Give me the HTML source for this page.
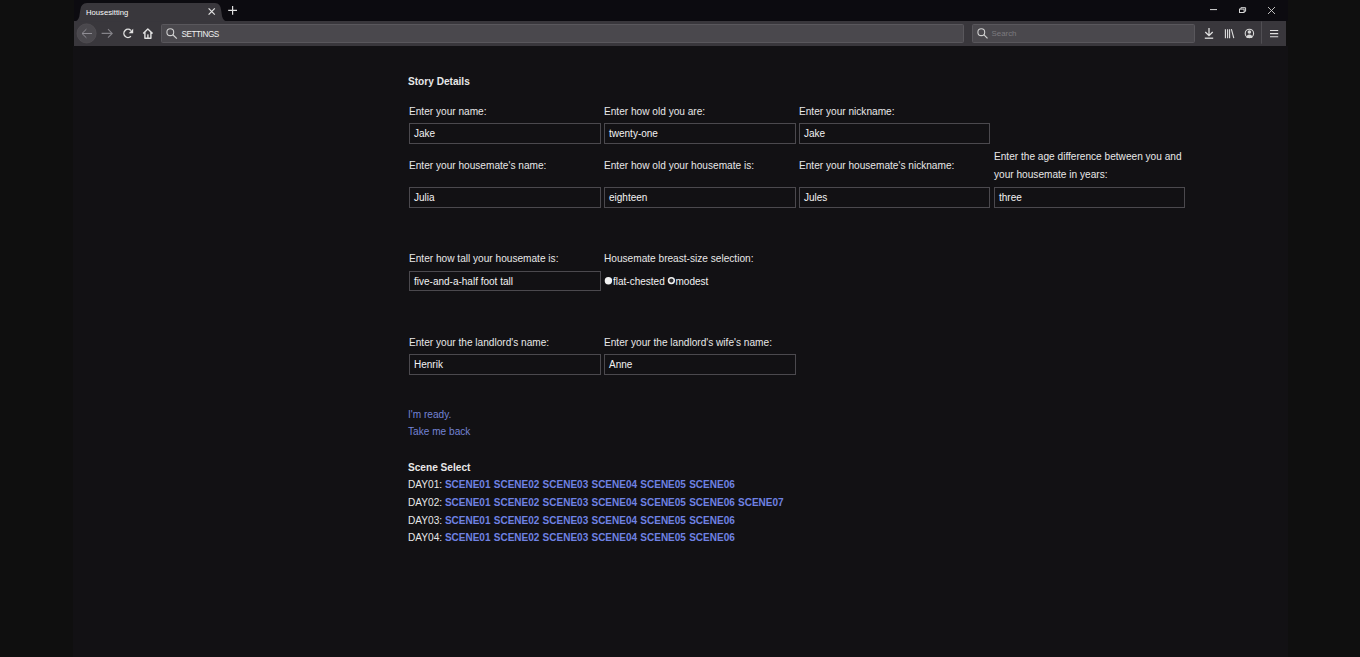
<!DOCTYPE html>
<html><head><meta charset="utf-8">
<style>
*{margin:0;padding:0;box-sizing:border-box}
html,body{width:1360px;height:657px;overflow:hidden;background:#0f0f0f;font-family:"Liberation Sans",sans-serif}
.a{position:absolute}
#titlebar{left:74px;top:0;width:1214px;height:21px;background:#0c0b10}
#toolbar{left:74px;top:21px;width:1212px;height:25px;background:#39373c}
#content{left:73px;top:46px;width:1215px;height:611px;background:#121114}
#tab{left:74px;top:3px;width:154px;height:19px;background:#39373c;border-radius:7px 7px 0 0}
.t{position:absolute;white-space:nowrap;line-height:14px;font-size:10.12px;color:#e8e8e8}
.b{font-weight:bold}
.inp{position:absolute;border:1px solid #4b494e;background:#121114;height:21px;width:192px}
.v{position:absolute;white-space:nowrap;line-height:14px;font-size:10px;color:#f3f3f3}
.lk{color:#7383d4}
.sc{color:#6f82e3;font-weight:bold;word-spacing:0.5px;font-size:10px}
</style></head><body>
<div class="a" id="titlebar"></div>
<div class="a" id="content"></div>
<div class="a" id="toolbar"></div>
<svg class="a" style="left:0;top:0" width="1360" height="50" viewBox="0 0 1360 50">
<path d="M74,21.5 C76.5,21.5 78.6,19.5 79.3,16.5 L80.2,10.5 Q80.8,3 87,3 L215,3 Q220.6,3 221.2,10.5 L222.1,16.5 C222.8,19.5 225,21.5 228,21.5 Z" fill="#39373c"/>
<!-- tab close -->
<path d="M208.6,8.4 L214.8,14.6 M214.8,8.4 L208.6,14.6" stroke="#e6e6e6" stroke-width="1.2" fill="none"/>
<!-- new tab + -->
<path d="M232.6,6 V14.8 M228.2,10.4 H237" stroke="#e0e0e0" stroke-width="1.2" fill="none"/>
<!-- window controls -->
<path d="M1210,9.6 H1217" stroke="#d8d8d8" stroke-width="1" fill="none"/>
<rect x="1239.5" y="9.1" width="4.6" height="3.4" stroke="#d8d8d8" stroke-width="1" fill="none"/>
<path d="M1240.9,9.1 V7.7 H1245.6 V11.3 H1244.1" stroke="#d8d8d8" stroke-width="1" fill="none"/>
<path d="M1268,7 L1275,14 M1275,7 L1268,14" stroke="#d0d0d0" stroke-width="0.9" fill="none"/>
<!-- back button -->
<circle cx="86.6" cy="33.4" r="9.6" fill="#4a484d" stroke="#555358" stroke-width="0.6"/>
<path d="M92,33.5 H82.2 M86.4,29.2 L82,33.5 L86.4,37.8" stroke="#8f8d94" stroke-width="1" fill="none"/>
<!-- forward -->
<path d="M101.6,33.4 H112 M108,29.2 L112.2,33.4 L108,37.6" stroke="#858389" stroke-width="1.1" fill="none"/>
<!-- reload -->
<path d="M130.9,30.5 A4.1,4.1 0 1 0 130.9,36.3" stroke="#e2e2e2" stroke-width="1.4" fill="none"/>
<path d="M133.2,28.8 L133.2,33.3 L128.7,33.3 Z" fill="#e2e2e2"/>
<!-- home -->
<path d="M143.2,33.6 L147.8,29 L152.6,33.6 M144.9,32.2 V38.2 H150.9 V32.2" stroke="#e2e2e2" stroke-width="1.4" fill="none" stroke-linejoin="round"/><rect x="147.2" y="34.4" width="1.4" height="3.8" fill="#e2e2e2"/>
<!-- url field -->
<rect x="161.5" y="24.5" width="802" height="18" rx="1" fill="#4a484d" stroke="#59575c" stroke-width="1"/>
<circle cx="170.3" cy="32.2" r="3.4" stroke="#d0d0d0" stroke-width="1.1" fill="none"/>
<path d="M172.8,34.7 L176.8,38.6" stroke="#d0d0d0" stroke-width="1.2"/>
<!-- search field -->
<rect x="972.5" y="24.5" width="222" height="18" rx="1" fill="#4a484d" stroke="#59575c" stroke-width="1"/>
<circle cx="981.3" cy="32.2" r="3.4" stroke="#d0d0d0" stroke-width="1.1" fill="none"/>
<path d="M983.8,34.7 L987.5,38.4" stroke="#d0d0d0" stroke-width="1.2"/>
<!-- download -->
<path d="M1209,28 V35.5 M1205.3,32 L1209,35.7 L1212.7,32" stroke="#e0e0e0" stroke-width="1.3" fill="none"/>
<path d="M1204.8,38.2 H1213.2" stroke="#e0e0e0" stroke-width="1.3"/>
<!-- library -->
<path d="M1225.4,29.2 V38.2 M1227.6,29.2 V38.2 M1229.6,29.2 V38.2 M1231.4,29.2 L1233.8,38.2" stroke="#e0e0e0" stroke-width="1.1" fill="none"/>
<!-- account -->
<circle cx="1249.4" cy="33.4" r="4.2" stroke="#d8d8d8" stroke-width="1.1" fill="none"/>
<circle cx="1249.4" cy="32" r="1.8" fill="#d8d8d8"/>
<path d="M1246.4,37.9 Q1246.7,34.5 1249.4,34.5 Q1252.1,34.5 1252.4,37.9 Z" fill="#d8d8d8"/>
<!-- separator -->
<path d="M1261.5,21.5 V43.7" stroke="#514f54" stroke-width="1"/>
<!-- menu -->
<path d="M1270,30.5 H1278.2 M1270,33.6 H1278.2 M1270,36.7 H1278.2" stroke="#e0e0e0" stroke-width="1.1"/>
</svg>
<div class="a" style="left:86px;top:6.5px;font-size:7.7px;line-height:12px;color:#fafafa;white-space:nowrap">Housesitting</div>
<div class="a" style="left:181.5px;top:29px;font-size:8.2px;letter-spacing:-0.45px;line-height:12px;color:#f0f0f0;white-space:nowrap">SETTINGS</div>
<div class="a" style="left:991.5px;top:28px;font-size:7.9px;line-height:12px;color:#7c7a7f;white-space:nowrap">Search</div>

<!-- page content -->
<div class="t b" style="left:408px;top:75px">Story Details</div>

<div class="t" style="left:409px;top:105px">Enter your name:</div>
<div class="t" style="left:604px;top:105px">Enter how old you are:</div>
<div class="t" style="left:799px;top:105px">Enter your nickname:</div>
<div class="inp" style="left:409px;top:123px;width:192px"></div>
<div class="inp" style="left:604px;top:123px;width:192px"></div>
<div class="inp" style="left:799px;top:123px;width:191px"></div>
<div class="v" style="left:414px;top:127px">Jake</div>
<div class="v" style="left:609px;top:127px">twenty-one</div>
<div class="v" style="left:804px;top:127px">Jake</div>

<div class="t" style="left:409px;top:159px">Enter your housemate's name:</div>
<div class="t" style="left:604px;top:159px">Enter how old your housemate is:</div>
<div class="t" style="left:799px;top:159px">Enter your housemate's nickname:</div>
<div class="t" style="left:994px;top:148px;line-height:18px">Enter the age difference between you and<br>your housemate in years:</div>
<div class="inp" style="left:409px;top:187px;width:192px"></div>
<div class="inp" style="left:604px;top:187px;width:192px"></div>
<div class="inp" style="left:799px;top:187px;width:191px"></div>
<div class="inp" style="left:994px;top:187px;width:191px"></div>
<div class="v" style="left:414px;top:191px">Julia</div>
<div class="v" style="left:609px;top:191px">eighteen</div>
<div class="v" style="left:804px;top:191px">Jules</div>
<div class="v" style="left:999px;top:191px">three</div>

<div class="t" style="left:409px;top:252px">Enter how tall your housemate is:</div>
<div class="t" style="left:604px;top:252px">Housemate breast-size selection:</div>
<div class="inp" style="left:409px;top:271px;width:192px;height:20px"></div>
<div class="v" style="left:414px;top:275px">five-and-a-half foot tall</div>
<svg class="a" style="left:600px;top:272px" width="80" height="18" viewBox="600 272 80 18">
<circle cx="608.4" cy="280.7" r="3.7" fill="#f2f2f2"/>
<circle cx="671.4" cy="280.6" r="2.9" fill="#2a292c" stroke="#f0f0f0" stroke-width="1.5"/>
</svg>
<div class="v" style="left:613px;top:275px">flat-chested</div>
<div class="v" style="left:675.5px;top:275px">modest</div>

<div class="t" style="left:409px;top:336px">Enter your the landlord's name:</div>
<div class="t" style="left:604px;top:336px">Enter your the landlord's wife's name:</div>
<div class="inp" style="left:409px;top:354px;width:192px"></div>
<div class="inp" style="left:604px;top:354px;width:192px"></div>
<div class="v" style="left:414px;top:358px">Henrik</div>
<div class="v" style="left:609px;top:358px">Anne</div>

<div class="t lk" style="left:408px;top:408px">I'm ready.</div>
<div class="t lk" style="left:408px;top:425px">Take me back</div>

<div class="t b" style="left:408px;top:461px">Scene Select</div>
<div class="t" style="left:408px;top:478px">DAY01: <span class="sc">SCENE01 SCENE02 SCENE03 SCENE04 SCENE05 SCENE06</span></div>
<div class="t" style="left:408px;top:496px">DAY02: <span class="sc">SCENE01 SCENE02 SCENE03 SCENE04 SCENE05 SCENE06 SCENE07</span></div>
<div class="t" style="left:408px;top:514px">DAY03: <span class="sc">SCENE01 SCENE02 SCENE03 SCENE04 SCENE05 SCENE06</span></div>
<div class="t" style="left:408px;top:531px">DAY04: <span class="sc">SCENE01 SCENE02 SCENE03 SCENE04 SCENE05 SCENE06</span></div>
</body></html>
